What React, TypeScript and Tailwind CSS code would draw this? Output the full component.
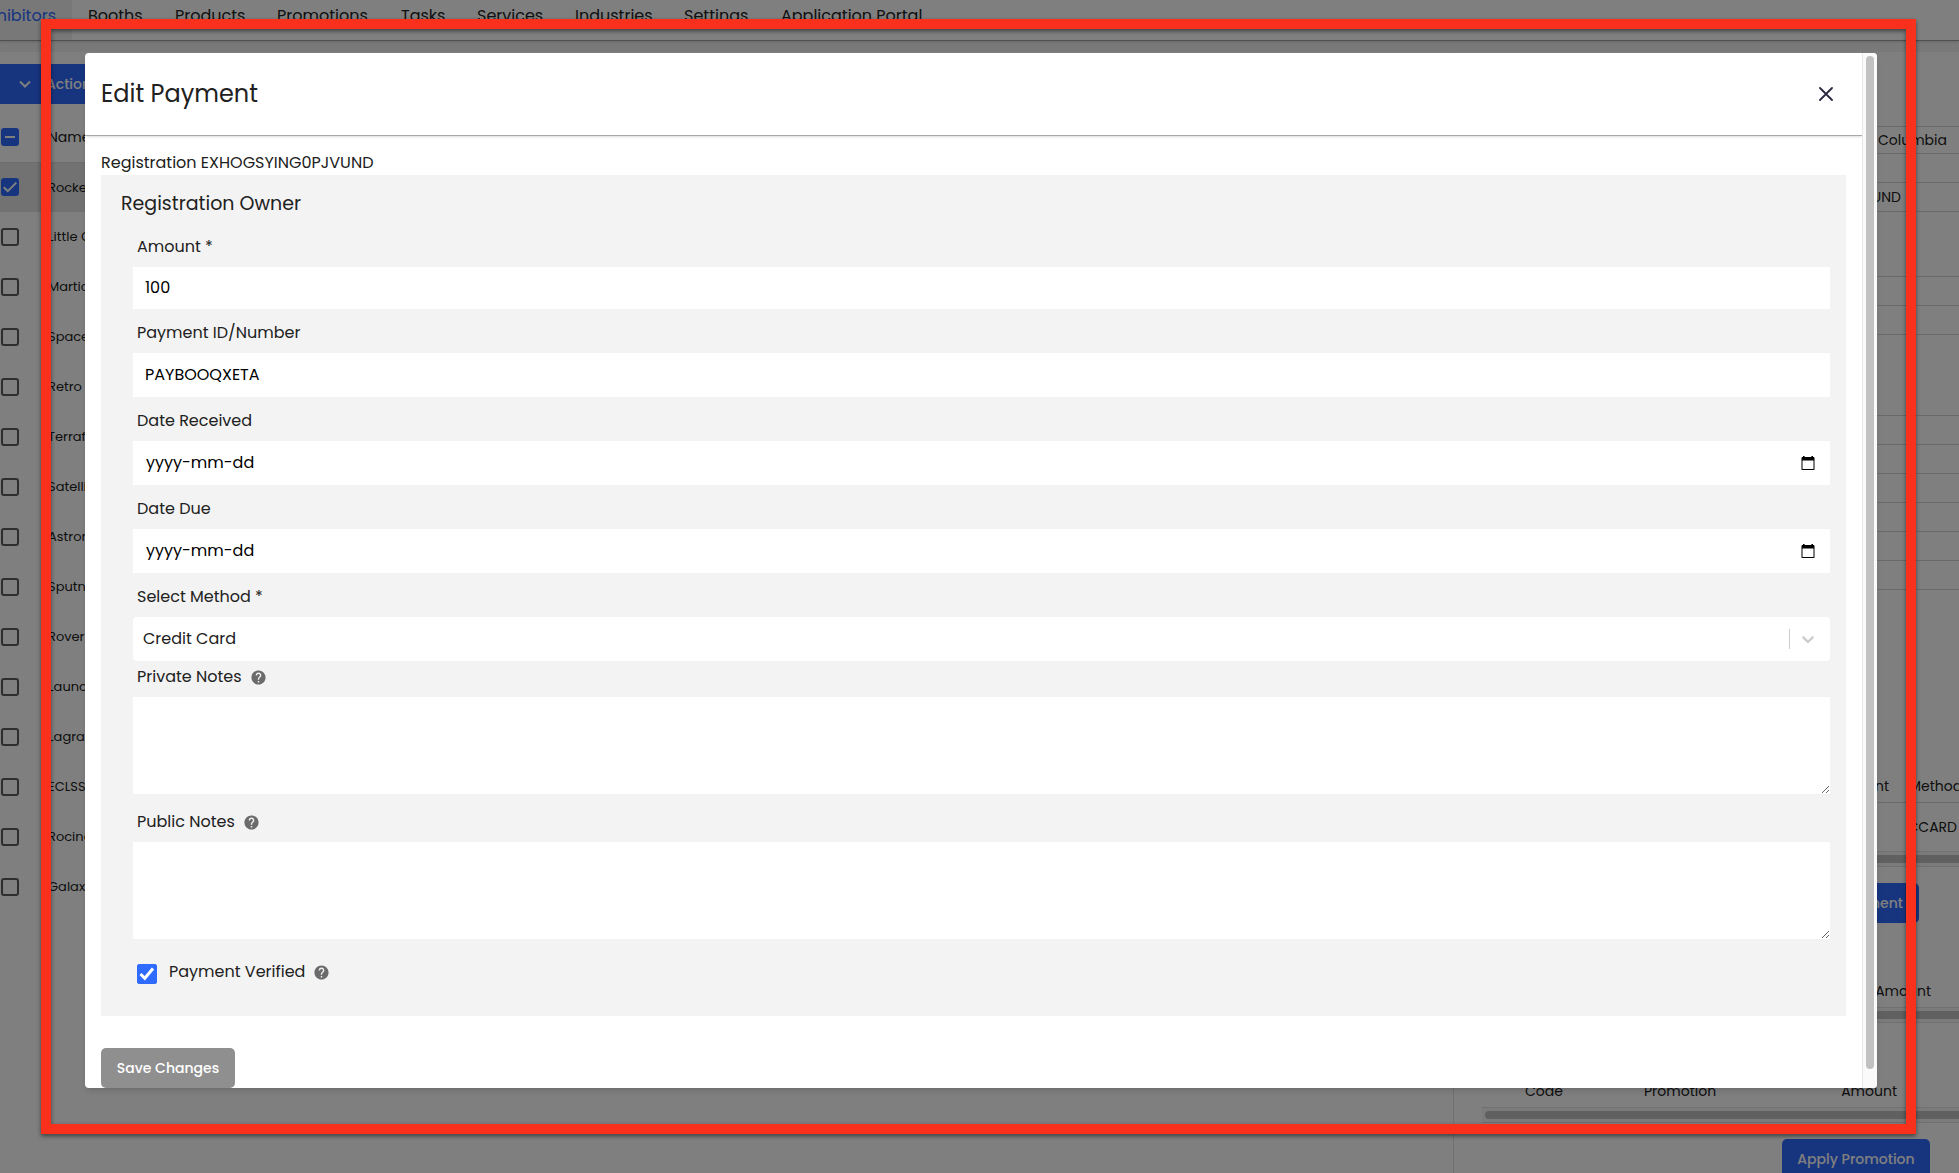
import React, { useState } from "react";
import { MdHelp } from "react-icons/md";

const TABS = [
  { label: "Booths", width: "w-[87px]" },
  { label: "Products", width: "w-[102px]" },
  { label: "Promotions", width: "w-[124px]" },
  { label: "Tasks", width: "w-[76px]" },
  { label: "Services", width: "w-[98px]" },
  { label: "Industries", width: "w-[109px]" },
  { label: "Settings", width: "w-[97px]" },
  { label: "Application Portal", width: "w-[180px]" },
];

const EXHIBITORS = [
  "Rocket",
  "Little Green",
  "Martian",
  "Space",
  "Retro",
  "Terraform",
  "Satellite",
  "Astronaut",
  "Sputnik",
  "Rover",
  "Launch",
  "Lagrange",
  "ECLSS",
  "Rocinante",
  "Galaxy",
];

const DETAIL_ROWS = [
  { height: "h-[75px]", text: "" },
  { height: "h-[27px]", text: "British Columbia", indent: "pr-3" },
  { height: "h-[29px]", text: "" },
  { height: "h-[29px]", text: "EXHOGSYING0PJVUND", indent: "pr-[58px]" },
  { height: "h-[65px]", text: "" },
  { height: "h-[29px]", text: "" },
  { height: "h-[29px]", text: "" },
  { height: "h-[81px]", text: "" },
  { height: "h-[29px]", text: "" },
  { height: "h-[29px]", text: "" },
  { height: "h-[29px]", text: "" },
  { height: "h-[29px]", text: "" },
  { height: "h-[29px]", text: "" },
  { height: "h-[29px]", text: "" },
];

function ListCheckbox({
  label,
  state,
}: {
  label: string;
  state: "checked" | "mixed" | "empty";
}) {
  return (
    <span className="grid size-[18px] shrink-0">
      <input
        type="checkbox"
        aria-label={label}
        defaultChecked={state !== "empty"}
        className="col-start-1 row-start-1 size-[18px] appearance-none rounded-[3px] border-2 border-[#5c5c5c] checked:border-[#2f6bff] checked:bg-[#2f6bff]"
      />
      {state !== "empty" && (
        <svg
          viewBox="0 0 18 18"
          className="pointer-events-none col-start-1 row-start-1 size-[18px]"
          fill="none"
          stroke="#fff"
          strokeWidth="2"
        >
          <path d={state === "mixed" ? "M4 9h10" : "M2.8 9.2l4 4L15.3 4.6"} />
        </svg>
      )}
    </span>
  );
}

function ScrollTrack({ rounded }: { rounded?: boolean }) {
  return (
    <div className="flex h-4 shrink-0 items-center border-y border-[#e0e0e0] bg-[#f6f6f6] pl-[3px]">
      <div
        className={
          rounded
            ? "h-2 flex-1 rounded-l-full bg-[#c1c1c1]"
            : "h-2 flex-1 bg-[#c1c1c1]"
        }
      />
    </div>
  );
}

function ExhibitorsPage() {
  return (
    <div className="flex h-screen flex-col bg-[#f2f2f2] text-[#212121]">
      <nav className="relative flex h-[41px] shrink-0 border-b border-[#a0a0a0] bg-white shadow-sm">
        <a
          href="#exhibitors"
          className="flex w-[72px] justify-end bg-[#f1f1f1] pt-1 pr-4 text-base leading-6 text-[#2f6bff]"
        >
          Exhibitors
        </a>
        {TABS.map((tab) => (
          <a
            key={tab.label}
            href="#tab"
            className={`${tab.width} pt-1 pl-4 text-base leading-6 whitespace-nowrap`}
          >
            {tab.label}
          </a>
        ))}
      </nav>

      <div className="mt-[11px] flex min-h-0 flex-1">
        <section className="flex-1 border-r border-[#e0e0e0] bg-white">
          <button
            type="button"
            className="mt-3 flex h-10 w-[180px] items-center bg-[#2f6bff] pl-[19px] text-sm font-medium text-white"
          >
            <svg viewBox="0 0 12 12" className="size-3" fill="none">
              <path d="M1 3.5l5 5 5-5" stroke="#fff" strokeWidth="2" />
            </svg>
            <span className="ml-[15px]">Actions</span>
          </button>
          <table className="w-full text-left">
            <thead>
              <tr className="h-[58px] border-b border-[#d8d8d8]">
                <th className="w-12 pt-2 pl-px align-middle">
                  <ListCheckbox label="Select all" state="mixed" />
                </th>
                <th className="pt-2 text-sm font-normal">Name</th>
              </tr>
            </thead>
            <tbody>
              {EXHIBITORS.map((name, index) => (
                <tr
                  key={name}
                  className={index === 0 ? "h-[50px] bg-[#e4e4e4]" : "h-[50px]"}
                >
                  <td className="pl-px">
                    <ListCheckbox
                      label={name}
                      state={index === 0 ? "checked" : "empty"}
                    />
                  </td>
                  <td className="text-[13px]">{name}</td>
                </tr>
              ))}
            </tbody>
          </table>
        </section>

        <aside className="flex w-[505px] flex-col overflow-hidden bg-white pl-7 text-sm">
          {DETAIL_ROWS.map((row, index) => (
            <div
              key={index}
              className={`${row.height} ${row.indent ?? ""} flex shrink-0 items-center justify-end border-b border-[#d4d4d4]`}
            >
              {row.text}
            </div>
          ))}

          <div className="flex h-[213px] shrink-0 items-end border-b border-[#d4d4d4] pb-1.5">
            <span className="w-[407px] shrink-0 text-right">Amount</span>
            <span className="ml-5">Method</span>
          </div>
          <div className="flex h-12 shrink-0 items-center justify-end pr-0.5">
            CCARD
          </div>
          <ScrollTrack />
          <div className="mt-4 flex shrink-0 justify-end pr-10">
            <button
              type="button"
              className="h-10 rounded-[5px] bg-[#2f6bff] px-4 font-medium text-white"
            >
              Add Payment
            </button>
          </div>
          <div className="flex h-[84px] shrink-0 items-end justify-end pr-7 pb-1.5">
            Amount
          </div>
          <ScrollTrack />
          <div className="flex h-[84px] shrink-0 items-end pb-1.5">
            <span className="w-[162px] pl-[43px]">Code</span>
            <span className="flex-1">Promotion</span>
            <span className="pr-[62px]">Amount</span>
          </div>
          <ScrollTrack rounded />
          <div className="mt-4 flex shrink-0 justify-end pr-[29px]">
            <button
              type="button"
              className="h-10 w-[148px] rounded-[5px] bg-[#2f6bff] font-medium text-white"
            >
              Apply Promotion
            </button>
          </div>
        </aside>
      </div>
    </div>
  );
}

function TextField({
  id,
  label,
  value,
  height,
}: {
  id: string;
  label: string;
  value: string;
  height: string;
}) {
  return (
    <div className="flex flex-col gap-2">
      <label htmlFor={id} className="pl-1 leading-6">
        {label}
      </label>
      <input
        id={id}
        type="text"
        defaultValue={value}
        className={`${height} w-full bg-white px-3 pb-0.5 text-black`}
      />
    </div>
  );
}

function DateField({ id, label }: { id: string; label: string }) {
  return (
    <div className="flex flex-col gap-2">
      <label htmlFor={id} className="pl-1 leading-6">
        {label}
      </label>
      <div className="flex h-11 items-center bg-white pr-[15px]">
        <input
          id={id}
          type="text"
          placeholder="yyyy-mm-dd"
          className="h-full min-w-0 flex-1 px-[13px] pb-0.5 text-black placeholder:text-black"
        />
        <button type="button" aria-label={`Choose ${label}`}>
          <svg viewBox="0 0 14 15" className="h-[15px] w-3.5">
            <path
              fillRule="evenodd"
              d="M2 0h1.600v1h6.800V0H12v1h.8c.4 0 .7.3.7.7v11.600c0 .4-.3.7-.7.7H1.200c-.4 0-.7-.3-.7-.7V1.700c0-.4.3-.7.7-.7H2V0zM1.500 4.500V13h11V4.500h-11z"
            />
          </svg>
        </button>
      </div>
    </div>
  );
}

function NotesField({ id, label }: { id: string; label: string }) {
  return (
    <div className="flex flex-col gap-2">
      <div className="flex items-center gap-2 pl-1">
        <label htmlFor={id} className="leading-6">
          {label}
        </label>
        <MdHelp className="size-[17px] text-[#6b6b6b]" />
      </div>
      <textarea id={id} className="block h-[97px] w-full resize-y bg-white p-3" />
    </div>
  );
}

function EditPaymentModal() {
  const [method, setMethod] = useState("Credit Card");
  const [verified, setVerified] = useState(true);

  return (
    <div
      role="dialog"
      aria-label="Edit Payment"
      className="flex h-full overflow-hidden rounded bg-white text-base text-[#212121] shadow-md"
    >
      <div className="min-w-0 flex-1">
        <header className="flex h-[83px] items-center justify-between border-b border-[#a8a8a8] pr-[29px] pl-4 shadow-sm">
          <h1 className="text-2xl">Edit Payment</h1>
          <button type="button" aria-label="Close">
            <svg viewBox="0 0 14 14" className="size-3.5" fill="none">
              <path
                d="M1 1l12 12M13 1L1 13"
                stroke="#2b2740"
                strokeWidth="1.8"
                strokeLinecap="round"
              />
            </svg>
          </button>
        </header>

        <form className="px-4 pt-[15px]" onSubmit={(e) => e.preventDefault()}>
          <p className="leading-6">Registration EXHOGSYING0PJVUND</p>
          <div className="bg-[#f3f3f3] pt-[13px] pr-4 pb-8 pl-8">
            <h2 className="-ml-3 text-[19px] leading-8">Registration Owner</h2>

            <div className="mt-[15px] flex flex-col gap-3">
              <TextField
                id="amount"
                label="Amount *"
                value="100"
                height="h-[42px]"
              />
              <TextField
                id="payment-id"
                label="Payment ID/Number"
                value="PAYBOOQXETA"
                height="h-11"
              />
              <DateField id="date-received" label="Date Received" />
              <DateField id="date-due" label="Date Due" />
              <div className="flex flex-col gap-2">
                <label htmlFor="method" className="pl-1 leading-6">
                  Select Method *
                </label>
                <div className="grid h-11 rounded bg-white">
                  <select
                    id="method"
                    value={method}
                    onChange={(e) => setMethod(e.target.value)}
                    className="col-start-1 row-start-1 w-full appearance-none rounded px-2.5"
                  >
                    <option>Credit Card</option>
                    <option>Cheque</option>
                    <option>Cash</option>
                  </select>
                  <div className="pointer-events-none col-start-1 row-start-1 flex items-center justify-self-end pr-3">
                    <span className="mr-2 h-5 w-px bg-[#cccccc]" />
                    <svg viewBox="0 0 20 20" className="size-5" fill="#cccccc">
                      <path d="M4.516 7.548c0.436-0.446 1.043-0.481 1.576 0l3.908 3.747 3.908-3.747c0.533-0.481 1.141-0.446 1.574 0 0.436 0.445 0.408 1.197 0 1.615-0.406 0.418-4.695 4.502-4.695 4.502-0.217 0.223-0.502 0.335-0.787 0.335s-0.570-0.112-0.789-0.335c0 0-4.287-4.084-4.695-4.502s-0.436-1.170 0-1.615z" />
                    </svg>
                  </div>
                </div>
              </div>
            </div>

            <div className="mt-1 flex flex-col gap-4">
              <NotesField id="private-notes" label="Private Notes" />
              <NotesField id="public-notes" label="Public Notes" />
            </div>

            <div className="mt-[25px] flex h-5 pl-1">
              <span className="grid size-5">
                <input
                  id="verified"
                  type="checkbox"
                  checked={verified}
                  onChange={(e) => setVerified(e.target.checked)}
                  className="col-start-1 row-start-1 size-5 appearance-none rounded-[2px] border border-[#767676] bg-white checked:border-[#2f6bff] checked:bg-[#2f6bff]"
                />
                {verified && (
                  <svg
                    viewBox="0 0 20 20"
                    className="pointer-events-none col-start-1 row-start-1 size-5"
                    fill="none"
                    stroke="#fff"
                    strokeWidth="3"
                  >
                    <path d="M3.500 10l4.300 4.300L16 4.500" />
                  </svg>
                )}
              </span>
              <label htmlFor="verified" className="ml-3 leading-4">
                Payment Verified
              </label>
              <MdHelp className="ml-2 size-[17px] text-[#6b6b6b]" />
            </div>
          </div>

          <button
            type="submit"
            className="mt-8 h-10 w-[134px] rounded-[5px] bg-[#8f8f8f] text-sm font-medium text-white"
          >
            Save Changes
          </button>
        </form>
      </div>

      {/* scrollbar */}
      <div className="flex w-[15px] justify-center border-l border-[#e8e8e8] bg-[#fafafa] pt-[3px] pb-[19px]">
        <div className="w-2 rounded-full bg-[#c1c1c1]" />
      </div>
    </div>
  );
}

export default function App() {
  return (
    <div className="relative h-screen overflow-hidden font-[Poppins,Inter,sans-serif]">
      <ExhibitorsPage />

      <div className="absolute inset-0 bg-black/50 pt-[53px] pr-[82px] pb-[85px] pl-[85px]">
        <EditPaymentModal />
      </div>

      {/* highlight frame around the dialog */}
      <div className="pointer-events-none absolute top-[19px] right-[43px] bottom-[39px] left-[41px] border-[10px] border-[#f9301c] drop-shadow-[0_2px_2px_rgba(0,0,0,0.5)]" />
    </div>
  );
}
